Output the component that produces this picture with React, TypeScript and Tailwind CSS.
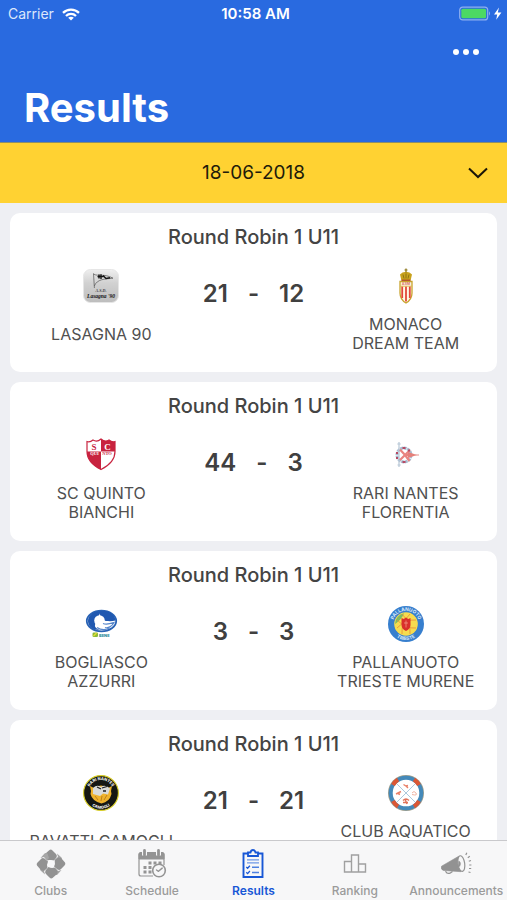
import { useState } from "react";
import type { ReactNode } from "react";

function WifiIcon() {
  return (
    <svg viewBox="0 0 18 13" className="h-[13px] w-[18px]" fill="none" stroke="white" strokeWidth="2.3" aria-hidden="true">
      <path d="M1 4.9C5.4.6 12.6.6 17 4.9" />
      <path d="M4 8C6.8 5.2 11.2 5.2 14 8" />
      <path d="M9 12.6 6.2 9.8c1.5-1.4 4.1-1.4 5.6 0Z" fill="white" stroke="none" />
    </svg>
  );
}

function BatteryIcon() {
  return (
    <svg viewBox="0 0 44 16" className="h-4 w-11" aria-hidden="true">
      <rect x="0.7" y="1.1" width="28" height="12.8" rx="3" fill="none" stroke="#8fb0f0" strokeWidth="1.2" />
      <rect x="2.3" y="2.7" width="24.8" height="9.6" rx="1.6" fill="#4cd964" />
      <path d="M30 5.3q2 2.2 0 4.4Z" fill="#8fb0f0" />
      <path d="M40 1.6 35 8.6h3.2l-1 5.2 5.2-7.200h-3.600Z" fill="white" />
    </svg>
  );
}

function LasagnaLogo() {
  return (
    <svg viewBox="0 0 36 36" className="size-9" role="img" aria-label="Lasagna 90">
      <defs>
        <linearGradient id="silver" x1="0" y1="0" x2="0" y2="1">
          <stop offset="0" stopColor="#efefef" />
          <stop offset="0.4" stopColor="#d2d2d2" />
          <stop offset="1" stopColor="#bdbdbd" />
        </linearGradient>
      </defs>
      <rect x="0.5" y="1.5" width="35" height="33" rx="7" fill="url(#silver)" stroke="#e6e6e6" />
      <path d="M10.5 5.5 11.4 20M10.5 6c5 3 10-1 19.500 4.200C22 11 14 11 11.300 18" fill="none" stroke="#555" strokeWidth="0.7" />
      <path d="M16 6.400v4.200M18 6.200v4.800M14.500 8.600h6M20 7.500l3 3 4-.8" fill="none" stroke="#111" strokeWidth="1.4" />
      <text x="18" y="24" textAnchor="middle" fontSize="4" fontWeight="700" fontStyle="italic" fontFamily="Liberation Serif, serif" fill="#444">A.S.D.</text>
      <text x="18" y="29.500" textAnchor="middle" fontSize="5.500" fontWeight="700" fontStyle="italic" fontFamily="Liberation Serif, serif" fill="#111">Lasagna '90</text>
    </svg>
  );
}

function MonacoLogo() {
  return (
    <svg viewBox="0 0 36 36" className="size-9" role="img" aria-label="Monaco Dream Team">
      <path d="M12 13.500h12V25c0 5-2.500 8-6 10-3.500-2-6-5-6-10Z" fill="#fff8e6" stroke="#c8a32c" strokeWidth="1.300" />
      <path d="M14.200 18.500v11.500M18 18.500v15M21.800 18.500v11.500" stroke="#e2473a" strokeWidth="1.800" />
      <path d="M12.500 18.200h11" stroke="#d9a93a" strokeWidth="0.800" />
      <text x="18" y="17.300" textAnchor="middle" fontSize="3.600" fontWeight="700" fontFamily="Inter, sans-serif" fill="#d8756a">ASM</text>
      <path d="M13.500 12.800 12 6.500l2.500-2 3.500-.8 3.500.8 2.500 2-1.500 6.300Z" fill="#c9a21d" />
      <path d="M18 .6v4M16.500 2h3" stroke="#8a7414" strokeWidth="1.200" />
      <path d="M15 6.500l1 4M18 5.500v5M21 6.500l-1 4" stroke="#806a10" strokeWidth="0.800" />
      <path d="M13.500 12.200h9" stroke="#a52f20" strokeWidth="1" />
    </svg>
  );
}

function QuintoLogo() {
  return (
    <svg viewBox="0 0 36 36" className="size-9" role="img" aria-label="SC Quinto Bianchi">
      <defs>
        <clipPath id="quinto-shield">
          <path d="M4 4.500q3 1 6-1.500 4 2.500 8-1 4 3.500 8 1 3 2.500 6 1.500v10c0 8-6 14-14 18C10 28.500 4 22.500 4 14.500Z" />
        </clipPath>
      </defs>
      <g clipPath="url(#quinto-shield)">
        <path d="M0 0h36v36H0Z" fill="#fff" />
        <path d="M18 0h18v16.500H18ZM3 16.500h15V36H3Z" fill="#c8233f" />
        <path d="M3 14.500h15v4.200H3Z" fill="#c8233f" />
        <path d="M18 14.500h15v4.200H18Z" fill="#fff" />
      </g>
      <path d="M4 4.500q3 1 6-1.500 4 2.500 8-1 4 3.500 8 1 3 2.500 6 1.500v10c0 8-6 14-14 18C10 28.500 4 22.500 4 14.500Z" fill="none" stroke="#c8233f" strokeWidth="1.200" />
      <g fontFamily="Liberation Serif, serif" fontWeight="700" textAnchor="middle">
        <text x="11" y="12.500" fontSize="9" fill="#c8233f">S</text>
        <text x="24.500" y="12.500" fontSize="9" fill="#fff">C</text>
        <text x="11.500" y="18.200" fontSize="4.500" fill="#fff">QUI</text>
        <text x="24" y="18.200" fontSize="4.500" fill="#c8233f">NTO</text>
      </g>
    </svg>
  );
}

function RariLogo() {
  return (
    <svg viewBox="0 0 36 36" className="size-9" role="img" aria-label="Rari Nantes Florentia" fill="none">
      <circle cx="16" cy="18" r="7" stroke="#a9bdd2" strokeWidth="3" strokeDasharray="3 0.600" />
      <path d="M11 5v25M9.300 7h3.400M9.500 28h3.200" stroke="#b7c7d6" strokeWidth="1.200" />
      <path d="M12 12.500l5 5.500-5 5M17 18h6M17 18l5-5M17 18l4.500 6" stroke="#e9857f" strokeWidth="2.200" />
      <path d="M20 15l9 3-9 3Z" fill="#e5807a" />
      <path d="M27 18h4" stroke="#eaa19c" strokeWidth="1.200" />
      <path d="M9 15v2M9 20v2M14.500 11h3M14.500 25h3M21 12.500v2" stroke="#b64a64" strokeWidth="2" />
    </svg>
  );
}

function BogliascoLogo() {
  return (
    <svg viewBox="0 0 36 36" className="size-9" role="img" aria-label="Bogliasco Azzurri">
      <ellipse cx="18.500" cy="15" rx="14.700" ry="10.300" fill="#fff" stroke="#2862b5" strokeWidth="1.800" />
      <path d="M18 5C10 5 5 9.500 5 15c0 4 3 7.500 7 8.500l5 .6c-3-1.200-5.500-2.600-5-5 .2-1 .8-1.500.8-2.500Z" fill="#2058b0" />
      <path d="M16 5h5c7 .4 11 4.500 11.500 9.500-4 1-8 1-14-.5Z" fill="#2058b0" />
      <circle cx="16.500" cy="14.500" r="5.300" fill="#fff" />
      <path d="M20 17.500c4 1.500 8 0 11-1-2 4-6 6-9 5M14 21.500c3 2 7 3 12 1" fill="none" stroke="#5686cb" strokeWidth="1.200" />
      <rect x="9.500" y="26.500" width="5.500" height="4.500" rx="1.300" fill="#8dbb36" />
      <path d="m10.500 30 3-3" stroke="#e7dc36" strokeWidth="1.200" />
      <text x="16" y="30.500" fontSize="4" fontWeight="800" fontFamily="Inter, sans-serif" fill="#2b8a99">BENE</text>
    </svg>
  );
}

function TriesteLogo() {
  return (
    <svg viewBox="0 0 36 36" className="size-9" role="img" aria-label="Pallanuoto Trieste Murene">
      <circle cx="18" cy="18" r="18" fill="#377fce" />
      <circle cx="18" cy="18" r="11.800" fill="#f6dc4f" />
      <path d="M7 18a11 11 0 0 1 9-10.800C14 12 12 14 7 18Z" fill="#7fba62" />
      <path d="M9 14q9 9 19 8M9 22q9-9 19-8M14 8q9 9 8 20M22 8q-9 9-8 20" fill="none" stroke="#e78a39" strokeWidth="0.800" />
      <path d="M13.500 12l2.200 1 2.300-1.500 2.300 1.500 2.200-1V19c0 3-2 4.700-4.500 6-2.500-1.300-4.500-3-4.500-6Z" fill="#d92f2b" />
      <path d="M18 14.500v7M16 17h4" stroke="#f5a08a" strokeWidth="0.700" />
      <path id="trieste-top" d="M4.800 18a13.200 13.200 0 0 1 26.400 0" fill="none" />
      <path id="trieste-bottom" d="M1.800 18a16.200 16.200 0 0 0 32.400 0" fill="none" />
      <g fill="#dbe9f7" fontSize="4.800" fontWeight="700" fontFamily="Inter, sans-serif" textAnchor="middle">
        <text><textPath href="#trieste-top" startOffset="50%">PALLANUOTO</textPath></text>
        <text><textPath href="#trieste-bottom" startOffset="50%">TRIESTE</textPath></text>
      </g>
    </svg>
  );
}

function CamogliLogo() {
  return (
    <svg viewBox="0 0 36 36" className="size-9" role="img" aria-label="Ravatti Camogli">
      <circle cx="18" cy="18" r="17.400" fill="#151713" stroke="#d9cf28" strokeWidth="1.100" />
      <path d="M7 11l4 2q7-5 14 0l4-2-1 5 .5 3q-2 8-10 9.500Q9 26 7.500 19l.5-3Z" fill="#efb32c" />
      <path d="M10 13q4-4 8-1 4-3 9 1.500l-2 6-5-1-3 2.500-7-2Z" fill="#d9dbd9" />
      <path d="M14 12l4 2M19 13l5-1.500M20 16h3" stroke="#202020" strokeWidth="1.300" />
      <path d="M12 21l3 4M19 21l-1 5M24 20l-3 5" stroke="#b97a18" strokeWidth="0.900" />
      <path id="camogli-top" d="M5 18a13 13 0 0 1 26 0" fill="none" />
      <path id="camogli-bottom" d="M2.300 18a15.700 15.700 0 0 0 31.400 0" fill="none" />
      <g fill="#eeeeec" fontSize="4" fontWeight="800" fontFamily="Inter, sans-serif" textAnchor="middle">
        <text><textPath href="#camogli-top" startOffset="50%">RARI NANTES</textPath></text>
        <text><textPath href="#camogli-bottom" startOffset="50%">CAMOGLI</textPath></text>
      </g>
    </svg>
  );
}

function AquaticoLogo() {
  return (
    <svg viewBox="0 0 36 36" className="size-9" role="img" aria-label="Club Aquatico" fill="none">
      <circle cx="18" cy="18" r="18" fill="#a2a08c" />
      <circle cx="18" cy="18" r="15.300" fill="#fff" stroke="#4489b9" strokeWidth="4" />
      <path d="M5 10a15.300 15.300 0 0 1 5-5.500M26 4.500a15.300 15.300 0 0 1 5 5.500M5 26a15.300 15.300 0 0 0 5 5.500M26 31.500a15.300 15.300 0 0 0 5-5.500" stroke="#dc5734" strokeWidth="4" />
      <path d="M9 9l18 18M27 9 9 27" stroke="#abc9dd" strokeWidth="1" />
      <path d="M15.500 9.500l2.500 1.500 2-.5M18 11l2 2M8 19l3-1.500 2-1M10 18.500l2 1" stroke="#e98169" strokeWidth="1.400" />
      <path d="M24 18q2-3 4 0t-4 1.500" stroke="#efb5a4" strokeWidth="1" />
      <path d="M15 25.500q3-3 6 0M15 27.500h5M17 24l2 5" stroke="#e0735a" strokeWidth="1.400" />
    </svg>
  );
}

function ClubsIcon() {
  return (
    <svg viewBox="0 0 30 30" className="size-[30px]" aria-hidden="true">
      {[0, 90, 180, 270].map((angle) => (
        <g key={angle} transform={`rotate(${angle} 15 15)`}>
          <path d="M9.500 4.500 13.500 1q1.500-1 3 .5l3.500 3.500q1.500 1.500.500 3.500l-3 3.500q-3-1.500-6-.5L8.500 8Q8 6 9.500 4.500Z" fill="#929292" />
          <path d="M21 4.500l4.500 4q1 1.500 0 3L21 13l-2.500-2 3.500-3Z" fill="#a6a6a6" />
        </g>
      ))}
      <path d="m12.500 11 6 .5-.5 6.500-6-.5Z" fill="#f7f7f8" />
    </svg>
  );
}

function ScheduleIcon() {
  return (
    <svg viewBox="0 0 30 30" className="size-[30px]" fill="none" stroke="#949494" aria-hidden="true">
      <path d="M27 16V5.500a2 2 0 0 0-2-2H4a2 2 0 0 0-2 2V25a2 2 0 0 0 2 2h12" strokeWidth="1.200" />
      <path d="M2 10V5.500a2 2 0 0 1 2-2h21a2 2 0 0 1 2 2V10Z" fill="#949494" />
      <path d="M7.500 1v5.500M21.500 1v5.500" stroke="#f7f7f8" strokeWidth="5" />
      <path d="M7.500 1.500v4.500M21.500 1.500v4.500" strokeWidth="2.800" strokeLinecap="round" />
      <path d="M11.500 14h3M16.500 14h3M21.500 14h3M6.500 18.500h3M11.500 18.500h3M6.500 23h3M11.500 23h3" strokeWidth="2.800" />
      <circle cx="22" cy="21.500" r="6.300" fill="#f7f7f8" strokeWidth="1.600" />
      <path d="m21.500 22.300 3.700-3.200M21.500 22.300l-2-1.300" strokeWidth="1.400" strokeLinecap="round" />
    </svg>
  );
}

function ResultsIcon() {
  return (
    <svg viewBox="0 0 30 30" className="size-[30px]" fill="none" stroke="#1857d6" aria-hidden="true">
      <path d="M10 4.500H5.500V28h19V4.500H20" strokeWidth="1.900" />
      <path d="M10 7V3.500h2.500Q13 1 15 1t2.500 2.500H20V7Z" strokeWidth="1.800" fill="#f7f7f8" />
      <path d="M9 10.800h12M9 13.800h12" strokeWidth="1.200" stroke="#6f98e5" />
      <path d="M14 18.200h7M14 23.500h7" strokeWidth="1.500" stroke="#4f81e0" />
      <path d="m8.300 18 1.300 1.300 2.300-2.600M8.300 23.300l1.300 1.300 2.300-2.600" strokeWidth="1.300" />
    </svg>
  );
}

function RankingIcon() {
  return (
    <svg viewBox="0 0 30 30" className="size-[30px]" fill="none" stroke="#a0a0a0" strokeWidth="1.400" aria-hidden="true">
      <path d="M4.500 23V12.500h7V6h7v9h7v8ZM11.500 12.500V23M18.500 15v8" />
    </svg>
  );
}

function AnnouncementsIcon() {
  return (
    <svg viewBox="0 0 34 30" className="h-[30px] w-[34px]" fill="none" stroke="#929292" aria-hidden="true">
      <path d="M2.500 17.200 20.500 6.800q-4 7.700 1.500 15.900L4.500 21.500q-3-1-2-4.300Z" fill="#929292" strokeWidth="0.600" />
      <ellipse cx="22.300" cy="14.600" rx="3.400" ry="7.900" transform="rotate(-8 22.300 14.600)" fill="#f7f7f8" strokeWidth="1.200" />
      <path d="M19.800 12q2.800 1.500.8 5.500l-1-1Z" fill="#929292" strokeWidth="0.600" />
      <path d="M6.500 22.200q1.500 3 4.500 2l2.500-1.700" strokeWidth="1.300" />
      <path d="m26.800 6 1-2.200M28.800 8.800l2-1.500M29.800 12.200l2.200-.7M30.200 16h2.200M30 19.500h2.200M29.500 23l2 .5" strokeWidth="1.200" />
    </svg>
  );
}

type Team = { name: string; logo: ReactNode };
type Match = { home: Team; away: Team; score: [number, number] };

const matches: Match[] = [
  { home: { name: "LASAGNA 90", logo: <LasagnaLogo /> }, away: { name: "MONACO\nDREAM TEAM", logo: <MonacoLogo /> }, score: [21, 12] },
  { home: { name: "SC QUINTO BIANCHI", logo: <QuintoLogo /> }, away: { name: "RARI NANTES FLORENTIA", logo: <RariLogo /> }, score: [44, 3] },
  { home: { name: "BOGLIASCO AZZURRI", logo: <BogliascoLogo /> }, away: { name: "PALLANUOTO TRIESTE MURENE", logo: <TriesteLogo /> }, score: [3, 3] },
  { home: { name: "RAVATTI CAMOGLI", logo: <CamogliLogo /> }, away: { name: "CLUB AQUATICO PESCARA", logo: <AquaticoLogo /> }, score: [21, 21] },
];

const tabs = [
  { label: "Clubs", icon: <ClubsIcon /> },
  { label: "Schedule", icon: <ScheduleIcon /> },
  { label: "Results", icon: <ResultsIcon /> },
  { label: "Ranking", icon: <RankingIcon /> },
  { label: "Announcements", icon: <AnnouncementsIcon /> },
];

function TeamColumn({ name, logo }: Team) {
  return (
    <div className="flex flex-col items-center">
      {logo}
      <div className="mt-[11px] flex h-[38px] w-36 items-center justify-center text-center text-base leading-[19px] whitespace-pre-line text-[#505050]">
        {name}
      </div>
    </div>
  );
}

function MatchCard({ home, away, score }: Match) {
  return (
    <article className="shrink-0 rounded-[10px] bg-white pt-2.5 pb-[19px]">
      <h2 className="text-center text-xl leading-7 font-medium text-[#444444]">Round Robin 1 U11</h2>
      <div className="mt-[17px] grid grid-cols-[3fr_2fr_3fr]">
        <TeamColumn {...home} />
        <div className="flex h-[52px] items-center justify-center gap-5 text-2xl font-semibold text-[#404040]">
          <span>{score[0]}</span>
          <span>-</span>
          <span>{score[1]}</span>
        </div>
        <TeamColumn {...away} />
      </div>
    </article>
  );
}

export default function App() {
  const [active, setActive] = useState("Results");
  return (
    <div className="flex h-screen flex-col overflow-hidden bg-[#eeeff3] font-['Inter',sans-serif]">
      <header className="shrink-0 border-b border-[#8d8f68] bg-[#296ae0] text-white">
        <div className="grid h-7 grid-cols-3 items-center pr-1 pl-2">
          <div className="flex items-center gap-2">
            <span className="text-sm text-[#dce7fb]">Carrier</span>
            <WifiIcon />
          </div>
          <span className="text-center text-[15px] leading-5 font-semibold">10:58 AM</span>
          <div className="flex justify-end">
            <BatteryIcon />
          </div>
        </div>
        <div className="flex h-12 items-center justify-end pr-7">
          <button type="button" aria-label="More options" className="flex items-center gap-1">
            <span className="size-1.5 rounded-full bg-white" />
            <span className="size-1.5 rounded-full bg-white" />
            <span className="size-1.5 rounded-full bg-white" />
          </button>
        </div>
        <h1 className="px-6 pt-2 pb-2.5 text-[40px] leading-[48px] font-bold">Results</h1>
      </header>

      <div className="relative shrink-0 bg-[#ffd232]">
        <select aria-label="Match day" className="block h-[60px] w-full appearance-none bg-transparent text-center text-[19px] text-[#211b0a] [text-align-last:center]">
          <option>18-06-2018</option>
        </select>
        <svg viewBox="0 0 20 12" className="pointer-events-none absolute top-6 right-[19px] h-3 w-5" fill="none" stroke="#1b1608" strokeWidth="2" aria-hidden="true">
          <path d="m1 1.500 9 8.500 9-8.500" />
        </svg>
      </div>

      <main className="flex min-h-0 flex-1 flex-col gap-2.5 overflow-hidden px-2.5 pt-2.5">
        {matches.map((match) => (
          <MatchCard key={match.home.name} {...match} />
        ))}
      </main>

      <nav className="grid h-[60px] shrink-0 grid-cols-5 border-t border-[#c9c9cc] bg-[#f7f7f8]">
        {tabs.map(({ label, icon }) => (
          <button
            key={label}
            type="button"
            onClick={() => setActive(label)}
            aria-current={label === active ? "page" : undefined}
            className={`flex min-w-0 flex-col items-center justify-start pt-2 text-xs leading-4 ${label === active ? "font-semibold text-[#1857d6]" : "font-medium text-[#9b9b9b]"}`}
          >
            {icon}
            <span className="mt-1 whitespace-nowrap">{label}</span>
          </button>
        ))}
      </nav>
    </div>
  );
}
